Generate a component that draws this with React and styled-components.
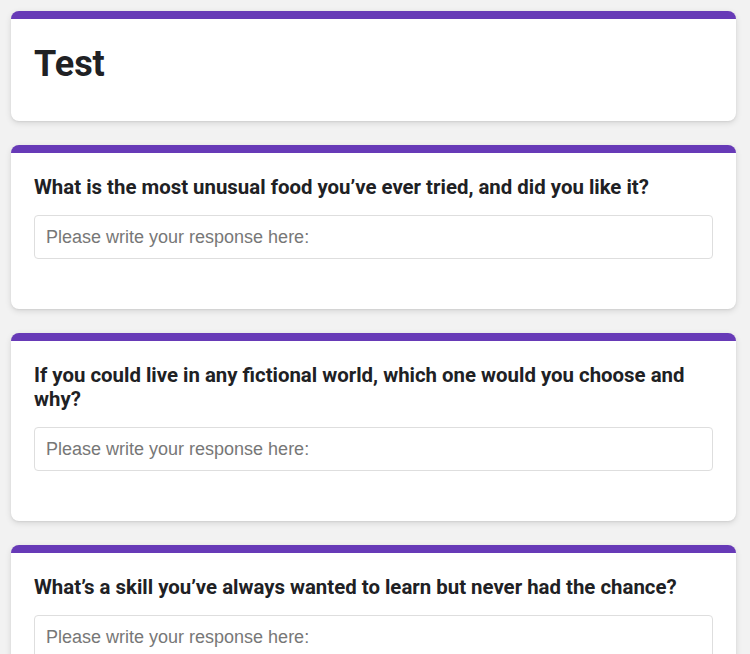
import React from "react";
import styled, { createGlobalStyle } from "styled-components";

const Global = createGlobalStyle`
  html, body { margin: 0; padding: 0; background: #f2f2f2; }
  body { font-family: Roboto, "Liberation Sans", sans-serif; }
  * { box-sizing: border-box; }
`;

const Page = styled.main`
  display: flex;
  flex-direction: column;
  gap: 24px;
  padding: 11px 14px 24px 11px;
`;

const Card = styled.section`
  background: #fff;
  border-radius: 8px;
  border-top: 8px solid #673ab7;
  box-shadow: 0 2px 6px rgba(0, 0, 0, 0.12), 0 1px 2px rgba(0, 0, 0, 0.06);
  padding: ${(p) => (p.$header ? "24px 23px 35px" : "22px 23px 50px")};
`;

const Title = styled.h1`
  margin: 0;
  font-family: Roboto, sans-serif;
  font-weight: 700;
  font-size: 36px;
  line-height: 1.2;
  color: #202124;
`;

const Question = styled.h2`
  margin: 0 0 16px;
  font-family: Roboto, sans-serif;
  font-weight: 700;
  font-size: 20.4px;
  line-height: 24px;
  color: #202124;
`;

const Input = styled.input`
  display: block;
  width: 100%;
  height: 44px;
  padding: 0 11px;
  border: 1px solid #dedede;
  border-radius: 4px;
  background: #fff;
  font-family: "Liberation Sans", Arial, sans-serif;
  font-size: 18px;
  color: #202124;
  outline: none;
  &::placeholder { color: #777; }
`;

const questions = [
  "What is the most unusual food you\u2019ve ever tried, and did you like it?",
  "If you could live in any fictional world, which one would you choose and why?",
  "What\u2019s a skill you\u2019ve always wanted to learn but never had the chance?",
];

export default function App() {
  return (
    <>
      <Global />
      <Page>
        <Card $header>
          <Title>Test</Title>
        </Card>
        {questions.map((q) => (
          <Card key={q}>
            <Question>{q}</Question>
            <Input placeholder="Please write your response here:" />
          </Card>
        ))}
      </Page>
    </>
  );
}
